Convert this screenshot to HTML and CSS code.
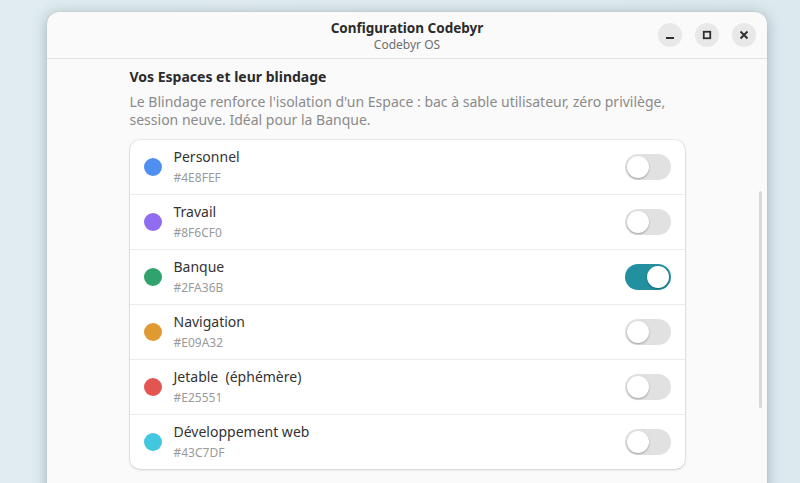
FILE: index.html
```html
<!DOCTYPE html>
<html lang="fr">
<head>
  <meta charset="UTF-8" />
  <meta name="viewport" content="width=device-width, initial-scale=1.0" />
  <title>Configuration Codebyr</title>
  <link rel="stylesheet" href="styles.css">
</head>
<body>
  <div class="window">
    <header class="titlebar">
      <div class="title">
        <div class="title-main">Configuration Codebyr</div>
        <div class="title-sub">Codebyr OS</div>
      </div>
      <div class="controls">
        <button class="ctl" aria-label="Réduire">
          <svg width="12" height="12" viewBox="0 0 12 12"><rect x="2" y="8" width="8" height="2" fill="#2e2e2e"/></svg>
        </button>
        <button class="ctl" aria-label="Agrandir">
          <svg width="12" height="12" viewBox="0 0 12 12"><rect x="2.75" y="2.75" width="6.5" height="6.5" fill="none" stroke="#2e2e2e" stroke-width="1.8"/></svg>
        </button>
        <button class="ctl" aria-label="Fermer">
          <svg width="12" height="12" viewBox="0 0 12 12"><path d="M2.5 2.5 L9.5 9.5 M9.5 2.5 L2.5 9.5" stroke="#2e2e2e" stroke-width="1.9"/></svg>
        </button>
      </div>
    </header>

    <main class="content">
      <div class="column">
        <h2>Vos Espaces et leur blindage</h2>
        <p class="desc">Le Blindage renforce l'isolation d'un Espace : bac à sable utilisateur, zéro privilège, session neuve. Idéal pour la Banque.</p>

        <div class="list">
          <div class="row">
            <span class="dot" style="background:#4E8FEF"></span>
            <div class="label"><div class="name">Personnel</div><div class="hex">#4E8FEF</div></div>
            <span class="switch"></span>
          </div>
          <div class="row">
            <span class="dot" style="background:#8F6CF0"></span>
            <div class="label"><div class="name">Travail</div><div class="hex">#8F6CF0</div></div>
            <span class="switch"></span>
          </div>
          <div class="row">
            <span class="dot" style="background:#2FA36B"></span>
            <div class="label"><div class="name">Banque</div><div class="hex">#2FA36B</div></div>
            <span class="switch on"></span>
          </div>
          <div class="row">
            <span class="dot" style="background:#E09A32"></span>
            <div class="label"><div class="name">Navigation</div><div class="hex">#E09A32</div></div>
            <span class="switch"></span>
          </div>
          <div class="row">
            <span class="dot" style="background:#E25551"></span>
            <div class="label"><div class="name">Jetable&nbsp; (éphémère)</div><div class="hex">#E25551</div></div>
            <span class="switch"></span>
          </div>
          <div class="row">
            <span class="dot" style="background:#43C7DF"></span>
            <div class="label"><div class="name">Développement web</div><div class="hex">#43C7DF</div></div>
            <span class="switch"></span>
          </div>
        </div>
      </div>
      <div class="scrollbar"></div>
    </main>
  </div>
</body>
</html>
```

FILE: styles.css
```css
html, body {
  margin: 0;
  padding: 0;
  height: 483px;
  overflow: hidden;
}
body {
  font-family: "Noto Sans", "Open Sans", sans-serif;
  background: linear-gradient(90deg, #e0ecef 0%, #dfeaee 50%, #dce9ee 100%);
  color: #2e2e2e;
}
.window {
  position: relative;
  margin: 12px 0 0 47px;
  width: 720px;
  height: 520px;
  background: #fafafa;
  border-radius: 12px 12px 0 0;
  box-shadow: 0 2px 14px rgba(60, 90, 100, 0.4), 0 0 1px rgba(0, 0, 0, 0.2);
  overflow: hidden;
}
.titlebar {
  position: relative;
  height: 46px;
  border-bottom: 1px solid #e2e2e2;
  display: flex;
  align-items: center;
  justify-content: center;
}
.title { text-align: center; }
.title-main {
  font-size: 13.5px;
  font-weight: bold;
  line-height: 18px;
  color: #2b2b2b;
}
.title-sub {
  font-size: 12px;
  line-height: 15px;
  color: #6f6f6f;
}
.controls {
  position: absolute;
  right: 11px;
  top: 11px;
  display: flex;
  gap: 13px;
}
.ctl {
  width: 24px;
  height: 24px;
  padding: 0;
  border: none;
  border-radius: 50%;
  background: #e8e8e8;
  display: flex;
  align-items: center;
  justify-content: center;
}
.content {
  position: relative;
  padding-top: 8px;
}
.column {
  width: 555px;
  margin: 0 auto;
}
h2 {
  margin: 0;
  font-size: 14px;
  line-height: 20px;
  font-weight: bold;
  color: #2b2b2b;
}
.desc {
  margin: 6px 0 11px;
  font-size: 14px;
  line-height: 18px;
  color: #8a8a8a;
}
.list {
  background: #fff;
  border-radius: 10px;
  box-shadow: 0 0 0 1px rgba(0, 0, 0, 0.06), 0 1px 3px rgba(0, 0, 0, 0.12);
}
.row {
  height: 54px;
  display: flex;
  align-items: center;
  padding: 0 14px;
  border-bottom: 1px solid #ebebeb;
}
.row:last-child { border-bottom: none; }
.dot {
  width: 18px;
  height: 18px;
  border-radius: 50%;
  flex: none;
  margin-right: 12px;
}
.label { flex: 1; }
.name {
  font-size: 14px;
  line-height: 20px;
  color: #333;
}
.hex {
  margin-top: 2px;
  font-size: 12px;
  line-height: 18px;
  color: #9a9a9a;
}
.switch {
  position: relative;
  width: 46px;
  height: 26px;
  border-radius: 13px;
  background: #e1e1e1;
  flex: none;
}
.switch::after {
  content: "";
  position: absolute;
  top: 2px;
  left: 2px;
  width: 22px;
  height: 22px;
  border-radius: 50%;
  background: #fff;
  box-shadow: 0 1px 2px rgba(0, 0, 0, 0.3);
}
.switch.on { background: #23909f; }
.switch.on::after { left: 22px; }
.scrollbar {
  position: absolute;
  right: 5px;
  top: 132px;
  width: 3px;
  height: 217px;
  border-radius: 2px;
  background: #d9d9d9;
}
```
